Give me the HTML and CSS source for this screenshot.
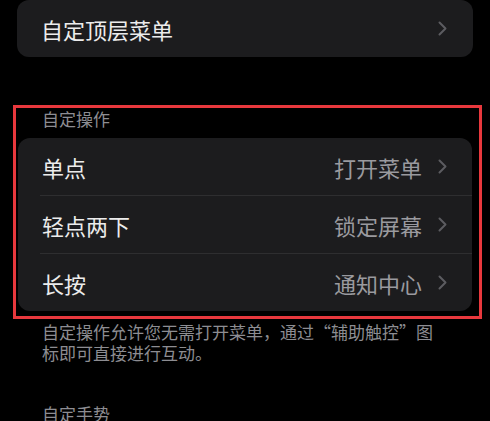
FILE: index.html
```html
<!DOCTYPE html>
<html lang="zh-CN">
<head>
  <meta charset="UTF-8" />
  <meta name="viewport" content="width=device-width, initial-scale=1" />
  <title>辅助触控</title>
  <link rel="stylesheet" href="styles.css">
</head>
<body>

  <div class="card top-card">
    <div class="row">
      <span class="label">自定顶层菜单</span>
      <svg class="chevron" width="9" height="15" viewBox="0 0 9 15"><path d="M1.5 1.5 L7.5 7.5 L1.5 13.5" /></svg>
    </div>
  </div>

  <div class="highlight">
    <div class="section-title">自定操作</div>
    <div class="card">
      <div class="row">
        <span class="label">单点</span>
        <span class="value">打开菜单</span>
        <svg class="chevron" width="9" height="15" viewBox="0 0 9 15"><path d="M1.5 1.5 L7.5 7.5 L1.5 13.5" /></svg>
      </div>
      <div class="row">
        <span class="label">轻点两下</span>
        <span class="value">锁定屏幕</span>
        <svg class="chevron" width="9" height="15" viewBox="0 0 9 15"><path d="M1.5 1.5 L7.5 7.5 L1.5 13.5" /></svg>
      </div>
      <div class="row">
        <span class="label">长按</span>
        <span class="value">通知中心</span>
        <svg class="chevron" width="9" height="15" viewBox="0 0 9 15"><path d="M1.5 1.5 L7.5 7.5 L1.5 13.5" /></svg>
      </div>
    </div>
  </div>

  <p class="footnote">自定操作允许您无需打开菜单，通过“辅助触控”图标即可直接进行互动。</p>

  <div class="section-title next">自定手势</div>

</body>
</html>
```

FILE: styles.css
```css
body {
  margin: 0;
  background-color: #000;
  color: #ececec;
  font-family: "Noto Sans CJK SC", "Noto Sans", sans-serif;
  overflow: hidden;
}

.card {
  background-color: #1c1c1e;
  border-radius: 12px;
  width: 454px;
}

.top-card {
  margin: 0 17px;
  width: 456px;
  height: 57px;
  display: flex;
  align-items: center;
}

.top-card .row {
  flex: 1;
  border-bottom: none;
  padding-right: 26px;
}

.row {
  display: flex;
  align-items: center;
  height: 57px;
  margin-left: 22px;
  padding: 0 25px 0 2px;
  border-bottom: 1px solid #2e2e30;
}

.row:last-child {
  border-bottom: none;
}

.label {
  flex: 1;
  font-size: 22px;
  line-height: 1;
}

.value {
  font-size: 22px;
  line-height: 1;
  color: #9a9a9f;
  margin-right: 16px;
}

.chevron {
  display: block;
  flex-shrink: 0;
}

.chevron path {
  fill: none;
  stroke: #5c5c60;
  stroke-width: 2;
  stroke-linecap: round;
  stroke-linejoin: round;
}

.highlight {
  margin: 48px 0 0 13px;
  width: 454px;
  border: 3px solid #e8383d;
  padding: 0 7px 5px 2px;
}

.section-title {
  font-size: 17px;
  line-height: 22px;
  color: #8d8d92;
  padding-left: 24px;
  margin-bottom: 8px;
}

.section-title.next {
  padding-left: 42px;
  margin-top: 40px;
}

.footnote {
  margin: 2px 0 0;
  padding: 0 45px 0 42px;
  font-size: 17px;
  line-height: 21px;
  color: #8d8d92;
}
```
